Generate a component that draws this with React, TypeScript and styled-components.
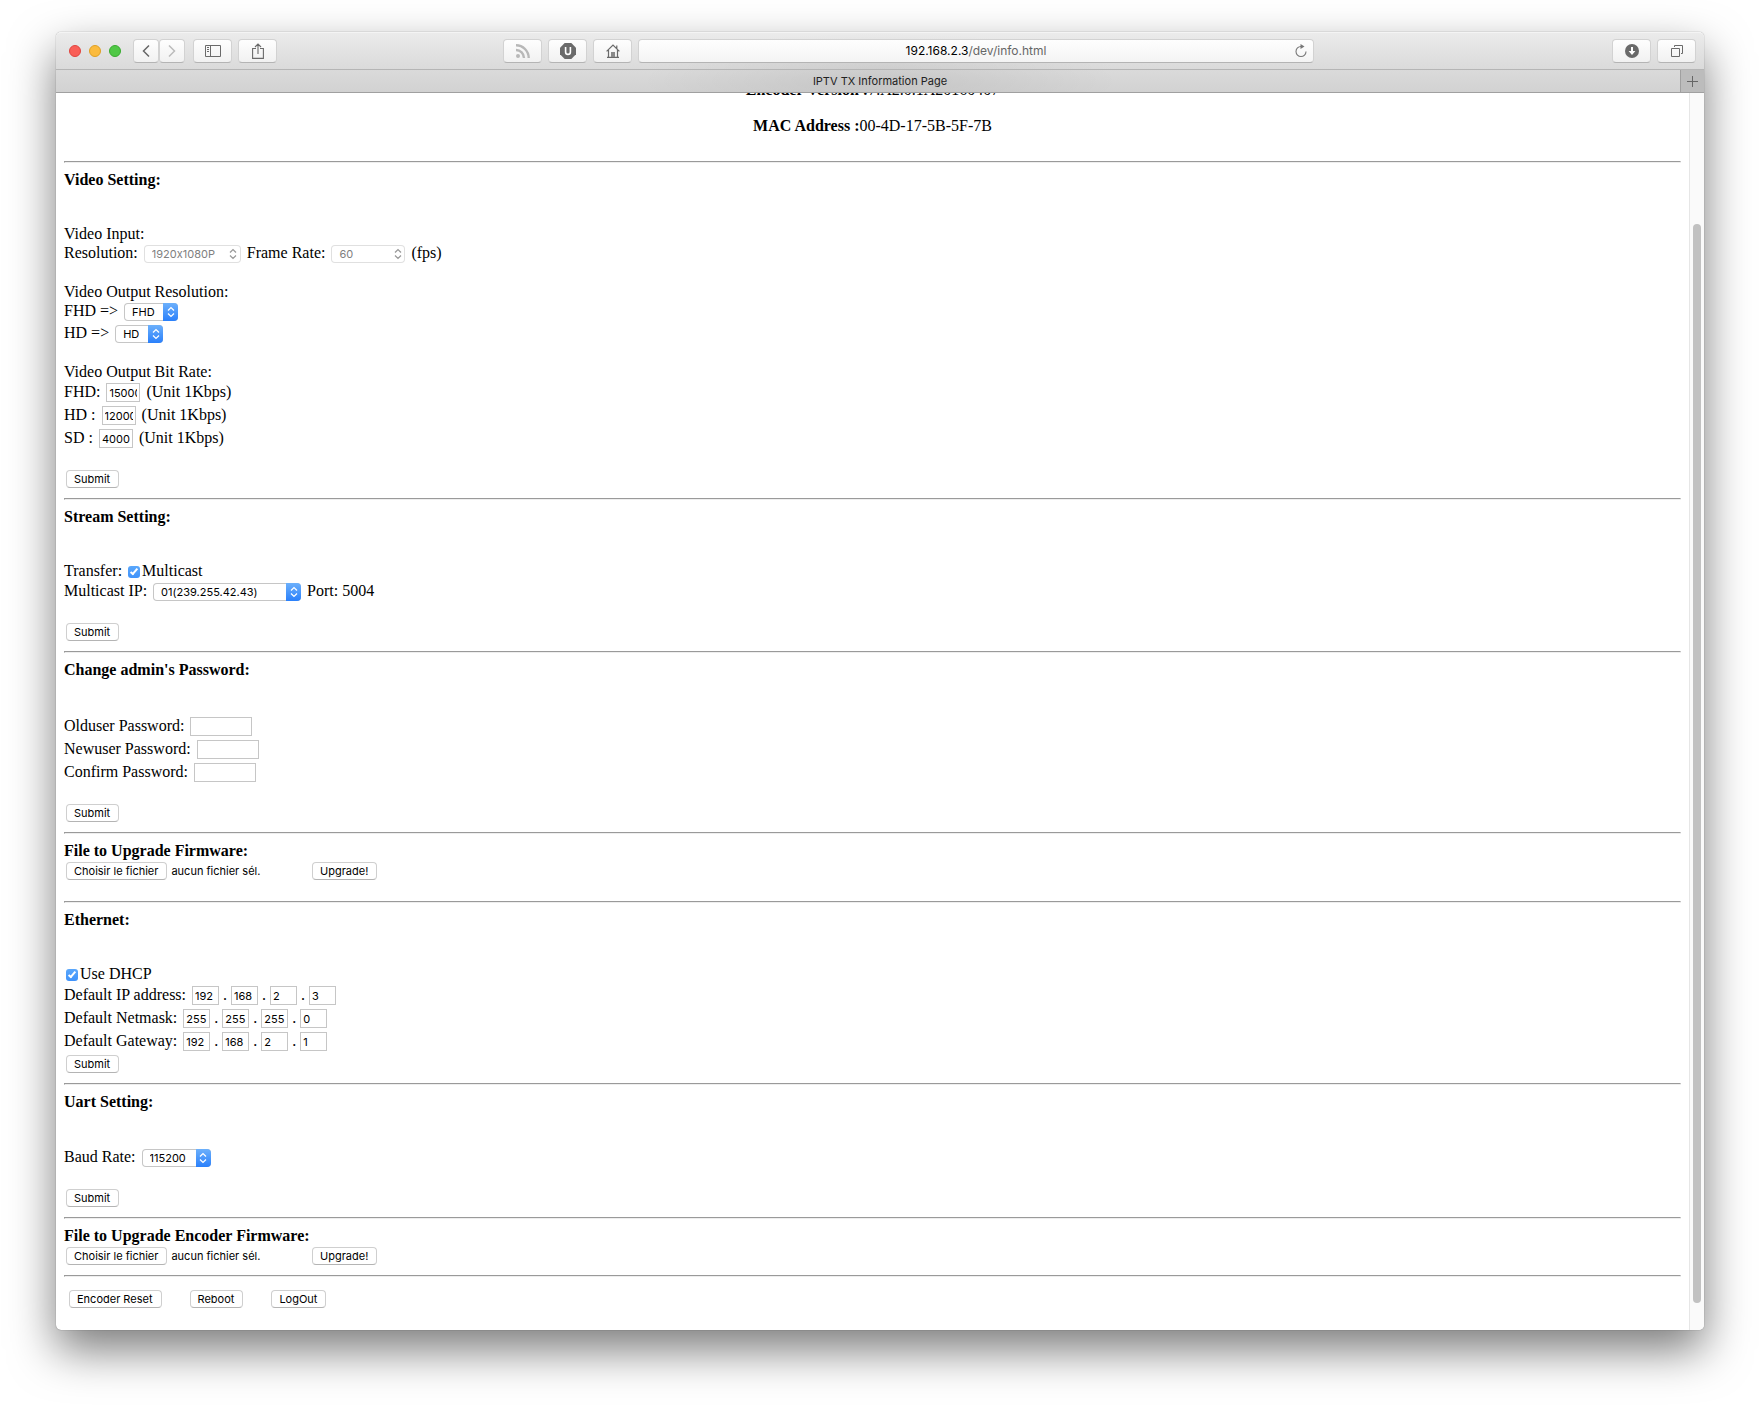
import React from "react";
import styled, { createGlobalStyle, css } from "styled-components";

const serif = `"Liberation Serif", "Times New Roman", serif`;
const sans = `Inter, Roboto, sans-serif`;

const GlobalStyle = createGlobalStyle`
  *, *::before, *::after { box-sizing: border-box; }
  body { margin: 0; background: #fff; color: #000; font: 16px/18px ${serif}; }
  button, input, select { margin: 0; font: 11px/16px ${sans}; font-feature-settings: "calt" 0; color: inherit; }
`;

const Desktop = styled.div`
  min-height: 100vh;
  padding: 32px 56px 80px;
  overflow: hidden;
`;

const Window = styled.div`
  display: flex;
  flex-direction: column;
  border-radius: 5px;
  background: #fff;
  box-shadow: 0 0 1px rgba(0, 0, 0, 0.6), 0 20px 46px rgba(0, 0, 0, 0.52);
`;

const Toolbar = styled.header`
  display: flex;
  align-items: center;
  height: 38px;
  padding: 0 8px 0 13px;
  border-top: 1px solid #f4f4f4;
  border-bottom: 1px solid #b5b5b5;
  border-radius: 5px 5px 0 0;
  background:
    radial-gradient(ellipse 240px 36px at 50% 100%, rgba(0, 0, 0, 0.06), transparent),
    linear-gradient(#ebebeb, #dadada);
`;

const Lights = styled.div`
  display: flex;
  gap: 8px;
  margin-right: 12px;
`;

const Light = styled.button<{ $fill: string; $edge: string }>`
  width: 12px;
  height: 12px;
  padding: 0;
  border: 1px solid ${(p) => p.$edge};
  border-radius: 50%;
  background: ${(p) => p.$fill};
`;

const History = styled.div`
  display: flex;
  margin-right: 8px;
`;

const Tools = styled.div`
  display: flex;
  gap: 6px;
`;

const Space = styled.div<{ $grow: number }>`
  flex: ${(p) => p.$grow} 1 0;
`;

const ToolButton = styled.button<{ $width: number }>`
  display: flex;
  align-items: center;
  justify-content: center;
  width: ${(p) => p.$width}px;
  height: 24px;
  padding: 0;
  border: 1px solid #d2d2d2;
  border-bottom-color: #b4b4b4;
  border-radius: 4px;
  background: linear-gradient(#fefefe, #f1f1f1);
`;

const AddressBar = styled.div`
  display: grid;
  flex: 0 1 676px;
  grid-template-columns: 24px 1fr 24px;
  align-items: center;
  height: 24px;
  margin-left: 6px;
  border: 1px solid #d2d2d2;
  border-bottom-color: #b4b4b4;
  border-radius: 4px;
  background: linear-gradient(#fefefe, #f4f4f4);
`;

const Address = styled.a`
  grid-column: 2;
  color: #666;
  font: 12px/22px ${sans};
  text-align: center;
  text-decoration: none;

  b { color: #000; font-weight: 400; }
`;

const PlainButton = styled.button`
  display: flex;
  align-items: center;
  justify-content: center;
  padding: 0;
  border: 0;
  background: none;
`;

const TabBar = styled.nav`
  display: flex;
  height: 23px;
  border-bottom: 1px solid #a0a0a0;
  background:
    radial-gradient(ellipse 240px 40px at 50% 50%, rgba(0, 0, 0, 0.07), transparent),
    linear-gradient(#dadada, #d2d2d2);
`;

const Tab = styled.button`
  flex: 1;
  padding: 0 0 0 24px;
  border: 0;
  background: none;
  color: #222;
  font: 11px/22px ${sans};
  text-align: center;
`;

const NewTab = styled(PlainButton)`
  width: 24px;
  border-left: 1px solid #a0a0a0;
  background: #bcbcbc;
`;

const Viewport = styled.div`
  display: flex;
  overflow: hidden;
  border-radius: 0 0 5px 5px;
`;

const Page = styled.main`
  flex: 1;
  min-width: 0;
  padding: 0 8px 22px;
`;

const Scrollbar = styled.div`
  display: flex;
  width: 15px;
  padding: 131px 3px 27px 3px;
  border-left: 1px solid #e6e6e6;
  background: #fafafa;
`;

const Thumb = styled.div`
  flex: 1;
  border-radius: 4px;
  background: #c1c1c1;
`;

const DeviceInfo = styled.div`
  margin-top: -12px;
  padding-bottom: 18px;
  text-align: center;

  p { margin: 0 0 18px; }
  p + p { margin: 0; }
`;

const Rule = styled.hr`
  height: 2px;
  margin: 8px 0;
  border: 1px solid;
  border-color: #9a9a9a #eee #eee #9a9a9a;
`;

const Title = styled.h2<{ $tight?: boolean }>`
  margin: 0 0 ${(p) => (p.$tight ? 0 : 36)}px;
  font-size: 16px;
  line-height: 18px;
`;

const Line = styled.div``;

const Blank = styled.div<{ $size?: number }>`
  height: ${(p) => p.$size ?? 18}px;
`;

const rowBase = css`
  display: flex;
  align-items: flex-start;
  gap: 6px;
`;

const SelectRow = styled.div`
  ${rowBase}
  height: 22px;
  padding-top: 1px;
`;

const InputRow = styled.div`
  ${rowBase}
  height: 23px;
  padding-top: 2px;
`;

const CheckRow = styled.div`
  ${rowBase}
  height: 19px;
`;

const ButtonRow = styled.div`
  ${rowBase}
  height: 22px;
  padding: 2px 2px 0;
`;

const SelectFrame = styled.span<{ $width: number; $off?: boolean }>`
  display: flex;
  width: ${(p) => p.$width}px;
  height: 18px;
  margin-top: 1px;
  overflow: hidden;
  border-radius: 4px;
  box-shadow: inset 0 0 0 1px ${(p) => (p.$off ? "#e0e0e0" : "#c6c6c6")};
  color: ${(p) => (p.$off ? "#808080" : "#000")};
`;

const SelectBox = styled.select`
  flex: 1;
  min-width: 0;
  padding: 0 0 0 8px;
  border: 0;
  background: none;
  appearance: none;
  line-height: 18px;

  &:disabled { color: #808080; opacity: 1; }
`;

const Arrows = styled.span<{ $off?: boolean }>`
  display: flex;
  align-items: center;
  justify-content: center;
  width: 15px;
  background: ${(p) => (p.$off ? "none" : "linear-gradient(#6cb0fb, #2a80fb)")};
  color: ${(p) => (p.$off ? "#999" : "#fff")};
`;

const TextBox = styled.input<{ $width: number }>`
  width: ${(p) => p.$width}px;
  height: 19px;
  padding: 1px 2px 0;
  border: 1px solid #c6c6c6;
  border-radius: 0;
  background: #fff;
`;

const Octets = styled.span`
  display: flex;
  gap: 2px;
`;

const Dot = styled.span`
  width: 8px;
  text-align: center;
`;

const CheckBox = styled.input`
  display: grid;
  place-items: center;
  width: 12px;
  height: 12px;
  margin-top: 4px;
  border-radius: 3px;
  background: #fff;
  box-shadow: inset 0 0 0 1px #c6c6c6;
  appearance: none;

  &:checked { background: linear-gradient(#5aa7fb, #3f93fb); box-shadow: none; }
  &:checked::after {
    content: "";
    width: 4px;
    height: 8px;
    margin-top: -2px;
    border: solid #fff;
    border-width: 0 2px 2px 0;
    transform: rotate(40deg);
  }
`;

const Checked = styled.span`
  display: flex;
  gap: 2px;
`;

const Indent = styled.span`
  padding-left: 2px;
`;

const pushButton = css`
  display: block;
  height: 18px;
  padding: 0 8px 0 7px;
  border: 1px solid #cfcfcf;
  border-bottom-color: #b4b4b4;
  border-radius: 4px;
  background: #fff;
  font: 11px/16px ${sans};
  white-space: nowrap;
`;

const Push = styled.button`
  ${pushButton}
`;

const FileLabel = styled.label`
  ${pushButton}
`;

const FileField = styled.div`
  display: flex;
  gap: 4px;
  width: 240px;
  font: 11px/18px ${sans};

  input {
    width: 1px;
    height: 1px;
    margin-left: -5px;
    opacity: 0;
  }
`;

const Actions = styled.footer`
  display: flex;
  gap: 28px;
  padding: 5px 5px 0;
`;

function Select(props: { id: string; options: string[]; width: number; off?: boolean }) {
  return (
    <SelectFrame $width={props.width} $off={props.off}>
      <SelectBox id={props.id} disabled={props.off}>
        {props.options.map((o) => (
          <option key={o}>{o}</option>
        ))}
      </SelectBox>
      <Arrows $off={props.off}>
        <svg width="8" height="12" viewBox="0 0 8 12" fill="none" stroke="currentColor" strokeWidth="1.3">
          <path d="M1 4.4 4 1.6l3 2.8M1 7.6l3 2.8 3-2.8" />
        </svg>
      </Arrows>
    </SelectFrame>
  );
}

function BitRate({ id, label, value }: { id: string; label: string; value: string }) {
  return (
    <InputRow>
      <label htmlFor={id}>{label}</label>
      <TextBox id={id} $width={34} defaultValue={value} />
      <span>(Unit 1Kbps)</span>
    </InputRow>
  );
}

function Password({ id, label }: { id: string; label: string }) {
  return (
    <InputRow>
      <label htmlFor={id}>{label}</label>
      <TextBox id={id} type="password" $width={62} />
    </InputRow>
  );
}

function IpAddress({ id, label, parts }: { id: string; label: string; parts: string[] }) {
  return (
    <InputRow>
      <label htmlFor={`${id}-0`}>{label}</label>
      <Octets>
        {parts.map((part, i) => (
          <React.Fragment key={i}>
            {i > 0 && <Dot>.</Dot>}
            <TextBox id={`${id}-${i}`} aria-label={`${label} ${i + 1}`} $width={27} defaultValue={part} />
          </React.Fragment>
        ))}
      </Octets>
    </InputRow>
  );
}

function Upgrade({ id }: { id: string }) {
  return (
    <ButtonRow>
      <FileField>
        <FileLabel htmlFor={id}>Choisir le fichier</FileLabel>
        <span>aucun fichier sél.</span>
        <input id={id} type="file" />
      </FileField>
      <Push>Upgrade!</Push>
    </ButtonRow>
  );
}

function Submit() {
  return (
    <ButtonRow>
      <Push>Submit</Push>
    </ButtonRow>
  );
}

export default function App() {
  return (
    <Desktop>
      <GlobalStyle />
      <Window>
        <Toolbar>
          <Lights>
            <Light aria-label="Close" $fill="#f95e57" $edge="#e0443e" />
            <Light aria-label="Minimize" $fill="#fbbb3e" $edge="#dfa023" />
            <Light aria-label="Zoom" $fill="#50c846" $edge="#38ab2f" />
          </Lights>
          <History>
            <ToolButton $width={26} aria-label="Back">
              <svg width="8" height="14" viewBox="0 0 8 14" fill="none" stroke="#666" strokeWidth="1.5">
                <path d="M7 1.5 1.5 7 7 12.5" />
              </svg>
            </ToolButton>
            <ToolButton $width={26} aria-label="Forward">
              <svg width="8" height="14" viewBox="0 0 8 14" fill="none" stroke="#bbb" strokeWidth="1.5">
                <path d="M1 1.5 6.5 7 1 12.5" />
              </svg>
            </ToolButton>
          </History>
          <Tools>
            <ToolButton $width={39} aria-label="Sidebar">
              <svg width="16" height="12" viewBox="0 0 16 12" fill="none" stroke="#6a6a6a">
                <path d="M.5.5h15v11H.5zM5.5.5v11M2 2.5h2M2 4.5h2M2 6.5h2" />
              </svg>
            </ToolButton>
            <ToolButton $width={39} aria-label="Share">
              <svg width="12" height="16" viewBox="0 0 12 16" fill="none" stroke="#6a6a6a" strokeWidth="1.1">
                <path d="M4 5.5H.6v9.9h10.8V5.5H8M6 11V1M3 4l3-3 3 3" />
              </svg>
            </ToolButton>
          </Tools>
          <Space $grow={226} />
          <Tools>
            <ToolButton $width={39} aria-label="Feeds">
              <svg width="14" height="14" viewBox="0 0 14 14" fill="none" stroke="#b8b8b8" strokeWidth="2.4">
                <path d="M0 6a8 8 0 0 1 8 8M0 1.3A12.7 12.7 0 0 1 12.7 14" />
                <circle cx="2" cy="12" r="2" fill="#b8b8b8" stroke="none" />
              </svg>
            </ToolButton>
            <ToolButton $width={39} aria-label="Content blocker">
              <svg width="16" height="16" viewBox="0 0 16 16">
                <path d="M4.7 0h6.6L16 4.7v6.6L11.3 16H4.7L0 11.3V4.7z" fill="#6a6a6a" />
                <path d="M5.6 4v5a2.4 2.4 0 0 0 4.8 0V4" fill="none" stroke="#fff" strokeWidth="1.6" />
              </svg>
            </ToolButton>
            <ToolButton $width={39} aria-label="Home">
              <svg width="14" height="14" viewBox="0 0 14 14" fill="none" stroke="#6a6a6a" strokeWidth="1.2">
                <path d="M.6 7.4 7 1l6.4 6.4M2.5 6v7.4M11.5 6v7.4M1 13.4h12M10.8 4.4V1.6" />
                <path d="M5 8h4v5H5z" fill="#8a8a8a" stroke="none" />
              </svg>
            </ToolButton>
          </Tools>
          <AddressBar>
            <Address href="#"><b>192.168.2.3</b>/dev/info.html</Address>
            <PlainButton aria-label="Reload">
              <svg width="12" height="14" viewBox="0 0 12 14" fill="none" stroke="#777" strokeWidth="1.1">
                <path d="M6 2.5A5 5 0 1 0 11 7.5" />
                <path d="M5.5 0v5L9.5 2.5z" fill="#777" stroke="none" />
              </svg>
            </PlainButton>
          </AddressBar>
          <Space $grow={298} />
          <Tools>
            <ToolButton $width={39} aria-label="Downloads">
              <svg width="14" height="14" viewBox="0 0 14 14">
                <circle cx="7" cy="7" r="7" fill="#6a6a6a" />
                <path d="M6 3h2v4h2.4L7 11 3.6 7H6z" fill="#fff" />
              </svg>
            </ToolButton>
            <ToolButton $width={39} aria-label="Show tabs">
              <svg width="12" height="12" viewBox="0 0 12 12" fill="none" stroke="#6a6a6a">
                <path d="M.5 3.5h8v8h-8zM3.5 2V.5h8v8H10" />
              </svg>
            </ToolButton>
          </Tools>
        </Toolbar>
        <TabBar>
          <Tab>IPTV TX Information Page</Tab>
          <NewTab aria-label="New tab">
            <svg width="11" height="11" viewBox="0 0 11 11" stroke="#666">
              <path d="M5.5 0v11M0 5.5h11" />
            </svg>
          </NewTab>
        </TabBar>
        <Viewport>
          <Page>
            <DeviceInfo>
              <p><b>Encoder Version :</b>7.A2.0.1A20160407</p>
              <p><b>MAC Address :</b>00-4D-17-5B-5F-7B</p>
            </DeviceInfo>
            <Rule />
            <Title>Video Setting:</Title>
            <Line>Video Input:</Line>
            <SelectRow>
              <label htmlFor="resolution">Resolution:</label>
              <Select id="resolution" options={["1920x1080P"]} width={97} off />
              <label htmlFor="rate">Frame Rate:</label>
              <Select id="rate" options={["60"]} width={74} off />
              <span>(fps)</span>
            </SelectRow>
            <Blank />
            <Line>Video Output Resolution:</Line>
            <SelectRow>
              <label htmlFor="fhd">FHD =&gt;</label>
              <Select id="fhd" options={["FHD"]} width={54} />
            </SelectRow>
            <SelectRow>
              <label htmlFor="hd">HD =&gt;</label>
              <Select id="hd" options={["HD"]} width={48} />
            </SelectRow>
            <Blank />
            <Line>Video Output Bit Rate:</Line>
            <BitRate id="fhd-rate" label="FHD:" value="15000" />
            <BitRate id="hd-rate" label="HD :" value="12000" />
            <BitRate id="sd-rate" label="SD :" value="4000" />
            <Blank />
            <Submit />
            <Rule />
            <Title>Stream Setting:</Title>
            <CheckRow>
              <span>Transfer:</span>
              <Checked>
                <CheckBox id="multicast" type="checkbox" defaultChecked />
                <label htmlFor="multicast">Multicast</label>
              </Checked>
            </CheckRow>
            <SelectRow>
              <label htmlFor="multicast-ip">Multicast IP:</label>
              <Select id="multicast-ip" options={["01(239.255.42.43)"]} width={148} />
              <span>Port: 5004</span>
            </SelectRow>
            <Blank />
            <Submit />
            <Rule />
            <Title>Change admin's Password:</Title>
            <Password id="old" label="Olduser Password:" />
            <Password id="new" label="Newuser Password:" />
            <Password id="confirm" label="Confirm Password:" />
            <Blank />
            <Submit />
            <Rule />
            <Title $tight>File to Upgrade Firmware:</Title>
            <Upgrade id="firmware" />
            <Blank $size={11} />
            <Rule />
            <Title>Ethernet:</Title>
            <CheckRow>
              <Indent>
                <Checked>
                  <CheckBox id="dhcp" type="checkbox" defaultChecked />
                  <label htmlFor="dhcp">Use DHCP</label>
                </Checked>
              </Indent>
            </CheckRow>
            <IpAddress id="ip" label="Default IP address:" parts={["192", "168", "2", "3"]} />
            <IpAddress id="mask" label="Default Netmask:" parts={["255", "255", "255", "0"]} />
            <IpAddress id="gateway" label="Default Gateway:" parts={["192", "168", "2", "1"]} />
            <Submit />
            <Rule />
            <Title>Uart Setting:</Title>
            <SelectRow>
              <label htmlFor="baud">Baud Rate:</label>
              <Select id="baud" options={["115200"]} width={69} />
            </SelectRow>
            <Blank />
            <Submit />
            <Rule />
            <Title $tight>File to Upgrade Encoder Firmware:</Title>
            <Upgrade id="encoder-firmware" />
            <Rule />
            <Actions>
              <Push>Encoder Reset</Push>
              <Push>Reboot</Push>
              <Push>LogOut</Push>
            </Actions>
          </Page>
          <Scrollbar>
            <Thumb />
          </Scrollbar>
        </Viewport>
      </Window>
    </Desktop>
  );
}
